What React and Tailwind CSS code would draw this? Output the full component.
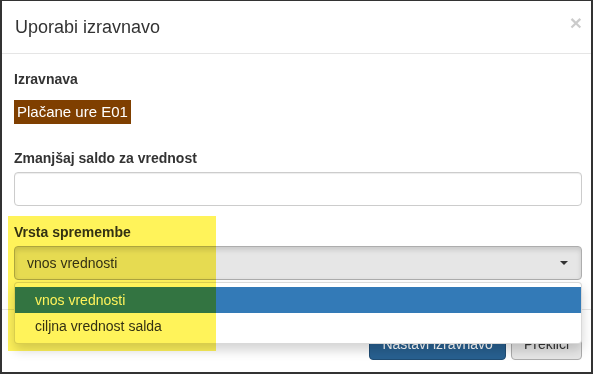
import React from 'react';

const App = () => {
  return (
    <div className="w-[593px] h-[374px] overflow-hidden bg-white border-2 border-t border-[#333] relative font-['Liberation_Sans',Arial,sans-serif] text-[#333]">
      {/* Header */}
      <div className="flex items-start justify-between h-[53px] pl-[13px] pr-[9px] pt-[13px] border-b border-[#e5e5e5]">
        <h4 className="text-[18px] leading-[26px]">Uporabi izravnavo</h4>
        <button className="text-[21px] font-bold leading-none text-black opacity-20 -mt-[2px]">×</button>
      </div>

      {/* Body */}
      <div className="pl-[12px] pr-[9px] pt-[15px]">
        <div className="mb-[15px]">
          <label className="block text-[14px] font-bold leading-[20px] mb-[11px]">Izravnava</label>
          <span className="inline-block bg-[#7f3f00] text-white text-[15px] leading-[24px] px-[3px]">Plačane ure E01</span>
        </div>

        <div className="mb-[15px] pt-[9px]">
          <label className="block text-[14px] font-bold leading-[20px] mb-[4px]">Zmanjšaj saldo za vrednost</label>
          <input className="block w-full h-[34px] border border-[#ccc] rounded-[4px] shadow-[inset_0_1px_1px_rgba(0,0,0,0.075)]" />
        </div>

        <div className="pt-[1px]">
          <label className="block text-[14px] font-bold leading-[20px] mb-[4px]">Vrsta spremembe</label>
          <div className="relative">
            <div className="flex items-center justify-between h-[34px] px-[12px] bg-[#e6e6e6] border border-[#adadad] rounded-[4px] shadow-[inset_0_3px_5px_rgba(0,0,0,0.125)] text-[14px]">
              <span>vnos vrednosti</span>
              <span className="w-0 h-0 border-l-[4px] border-r-[4px] border-t-[4px] border-l-transparent border-r-transparent border-t-[#333] mr-[1px]" />
            </div>

            {/* Dropdown */}
            <div className="absolute left-0 right-0 top-[36px] z-20 bg-white border border-[rgba(0,0,0,0.15)] rounded-[4px] shadow-[0_6px_12px_rgba(0,0,0,0.175)] py-[4px] text-[14px]">
              <div className="h-[26px] leading-[26px] pl-[20px] bg-[#337ab7] text-white">vnos vrednosti</div>
              <div className="h-[26px] leading-[26px] pl-[20px] text-[#333]">ciljna vrednost salda</div>
            </div>
          </div>
        </div>
      </div>

      {/* Footer */}
      <div className="flex justify-end gap-[5px] mt-[29px] pt-[16px] px-[9px] border-t border-[#e5e5e5]">
        <button className="h-[34px] px-[12px] pt-[2px] rounded-[4px] bg-[#286090] border border-[#204d74] text-white text-[14px]">Nastavi izravnavo</button>
        <button className="h-[34px] px-[12px] pt-[2px] rounded-[4px] bg-[#e6e6e6] border border-[#adadad] text-[#333] text-[14px]">Prekliči</button>
      </div>

      {/* Highlighter */}
      <div className="absolute left-[6px] top-[215px] w-[208px] h-[135px] z-30 bg-[#fff35a] mix-blend-multiply pointer-events-none" />
    </div>
  );
};

export default App;
